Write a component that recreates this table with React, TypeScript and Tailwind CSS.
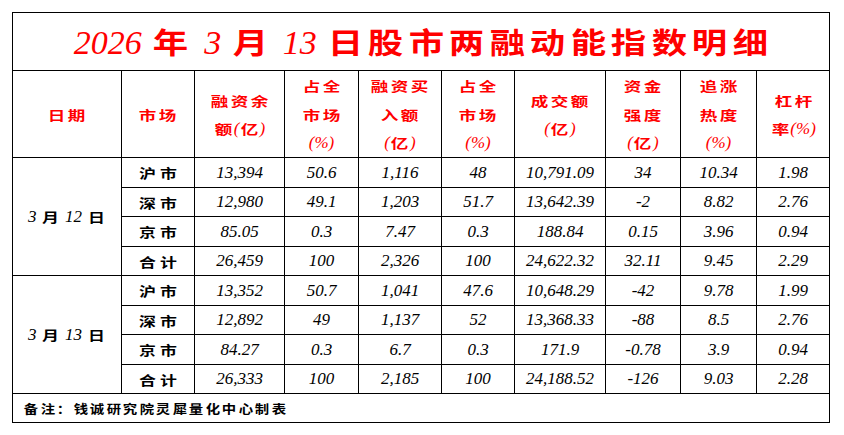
import React from "react";

const isCJK = (c: string) => c.charCodeAt(0) > 0x2e80;

type MixProps = { t: string; box: string; cjk: string; lat: string };

function Mix({ t, box, cjk, lat }: MixProps) {
  const parts: { s: string; c: boolean }[] = [];
  for (const ch of Array.from(t)) {
    const c = isCJK(ch);
    const last = parts[parts.length - 1];
    if (!c && last && !last.c) last.s += ch;
    else parts.push({ s: ch, c });
  }
  return (
    <>
      {parts.map((p, i) =>
        p.c ? (
          <span key={i} className={`inline-block text-center ${box}`}>
            <span className={`inline-block font-['Noto_Sans_CJK_SC',sans-serif] font-bold ${cjk}`}>{p.s}</span>
          </span>
        ) : (
          <span key={i} className={`font-['Liberation_Serif',serif] italic whitespace-pre ${lat}`}>
            {p.s}
          </span>
        )
      )}
    </>
  );
}

const H = ({ t }: { t: string }) => (
  <div className="h-[28.5px] flex items-center justify-center leading-none">
    <Mix t={t} box="w-[20px]" cjk="text-[13px] scale-x-[1.35]" lat="text-[17px]" />
  </div>
);

const headers: string[][] = [
  ["日期"],
  ["市场"],
  ["融资余", "额(亿)"],
  ["占全", "市场", "(%)"],
  ["融资买", "入额", "(亿)"],
  ["占全", "市场", "(%)"],
  ["成交额", "(亿)"],
  ["资金", "强度", "(亿)"],
  ["追涨", "热度", "(%)"],
  ["杠杆", "率(%)"],
];

const widths = [109, 73, 90, 74, 83, 73, 91, 75, 76, 73];

const groups: { date: [string, string]; rows: string[][] }[] = [
  {
    date: ["3", "12"],
    rows: [
      ["沪市", "13,394", "50.6", "1,116", "48", "10,791.09", "34", "10.34", "1.98"],
      ["深市", "12,980", "49.1", "1,203", "51.7", "13,642.39", "-2", "8.82", "2.76"],
      ["京市", "85.05", "0.3", "7.47", "0.3", "188.84", "0.15", "3.96", "0.94"],
      ["合计", "26,459", "100", "2,326", "100", "24,622.32", "32.11", "9.45", "2.29"],
    ],
  },
  {
    date: ["3", "13"],
    rows: [
      ["沪市", "13,352", "50.7", "1,041", "47.6", "10,648.29", "-42", "9.78", "1.99"],
      ["深市", "12,892", "49", "1,137", "52", "13,368.33", "-88", "8.5", "2.76"],
      ["京市", "84.27", "0.3", "6.7", "0.3", "171.9", "-0.78", "3.9", "0.94"],
      ["合计", "26,333", "100", "2,185", "100", "24,188.52", "-126", "9.03", "2.28"],
    ],
  },
];

const rowH = ["h-[30px]", "h-[29px]", "h-[30px]", "h-[29px]"];

const TC = ({ c }: { c: string }) => (
  <span className="inline-block w-[40.5px] text-center">
    <span className="inline-block scale-x-[1.22] text-[29px] font-['Noto_Sans_CJK_SC',sans-serif] font-bold">{c}</span>
  </span>
);

const TD = ({ t, cls = "" }: { t: string; cls?: string }) => (
  <span className={`font-['Liberation_Serif',serif] italic text-[34px] ${cls}`}>{t}</span>
);

export default function App() {
  return (
    <div className="w-[844px] h-[435px] bg-white pt-[12px] pl-[12px]">
      <table className="border-collapse table-fixed w-[818px] text-black">
        <colgroup>
          {widths.map((w, i) => (
            <col key={i} style={{ width: w }} />
          ))}
        </colgroup>
        <tbody>
          <tr className="h-[58px]">
            <td colSpan={10} className="border border-black p-0 align-middle">
              <div className="flex items-baseline justify-center text-[#ff0000] leading-none pl-[2px] pt-[2px]">
                <TD t="2026" />
                <span className="ml-[8px]"><TC c="年" /></span>
                <TD t="3" cls="ml-[14px]" />
                <span className="ml-[9px]"><TC c="月" /></span>
                <TD t="13" cls="ml-[12px]" />
                <span className="ml-[8px] flex items-baseline">
                  {Array.from("日股市两融动能指数明细").map((c, i) => (
                    <TC key={i} c={c} />
                  ))}
                </span>
              </div>
            </td>
          </tr>
          <tr className="h-[86px]">
            {headers.map((lines, i) => (
              <td key={i} className="border border-black p-0 align-middle text-[#ff0000]">
                <div className="flex flex-col items-center justify-center">
                  {lines.map((l, j) => (
                    <H key={j} t={l} />
                  ))}
                </div>
              </td>
            ))}
          </tr>
          {groups.map((g, gi) =>
            g.rows.map((r, ri) => (
              <tr key={`${gi}-${ri}`} className={rowH[ri]}>
                {ri === 0 && (
                  <td rowSpan={4} className="border border-black p-0 align-middle">
                    <div className="flex items-baseline justify-center leading-none">
                      <Mix t={`${g.date[0]} 月 ${g.date[1]} 日`} box="w-[20px]" cjk="text-[13px] scale-x-[1.3]" lat="text-[17px]" />
                    </div>
                  </td>
                )}
                <td className="border border-black p-0 align-middle">
                  <div className="flex items-center justify-center leading-none">
                    <Mix t={r[0]} box="w-[21px]" cjk="text-[13px] scale-x-[1.3]" lat="text-[17px]" />
                  </div>
                </td>
                {r.slice(1).map((v, vi) => (
                  <td
                    key={vi}
                    className="border border-black p-0 align-middle text-center font-['Liberation_Serif',serif] italic text-[17px] leading-none"
                  >
                    {v}
                  </td>
                ))}
              </tr>
            ))
          )}
          <tr className="h-[29px]">
            <td colSpan={10} className="border border-black p-0 pl-[10px] align-middle">
              <div className="flex items-center leading-none">
                <Mix t="备注：钱诚研究院灵犀量化中心制表" box="w-[16.5px]" cjk="text-[12px] scale-x-[1.2]" lat="text-[14px]" />
              </div>
            </td>
          </tr>
        </tbody>
      </table>
    </div>
  );
}
